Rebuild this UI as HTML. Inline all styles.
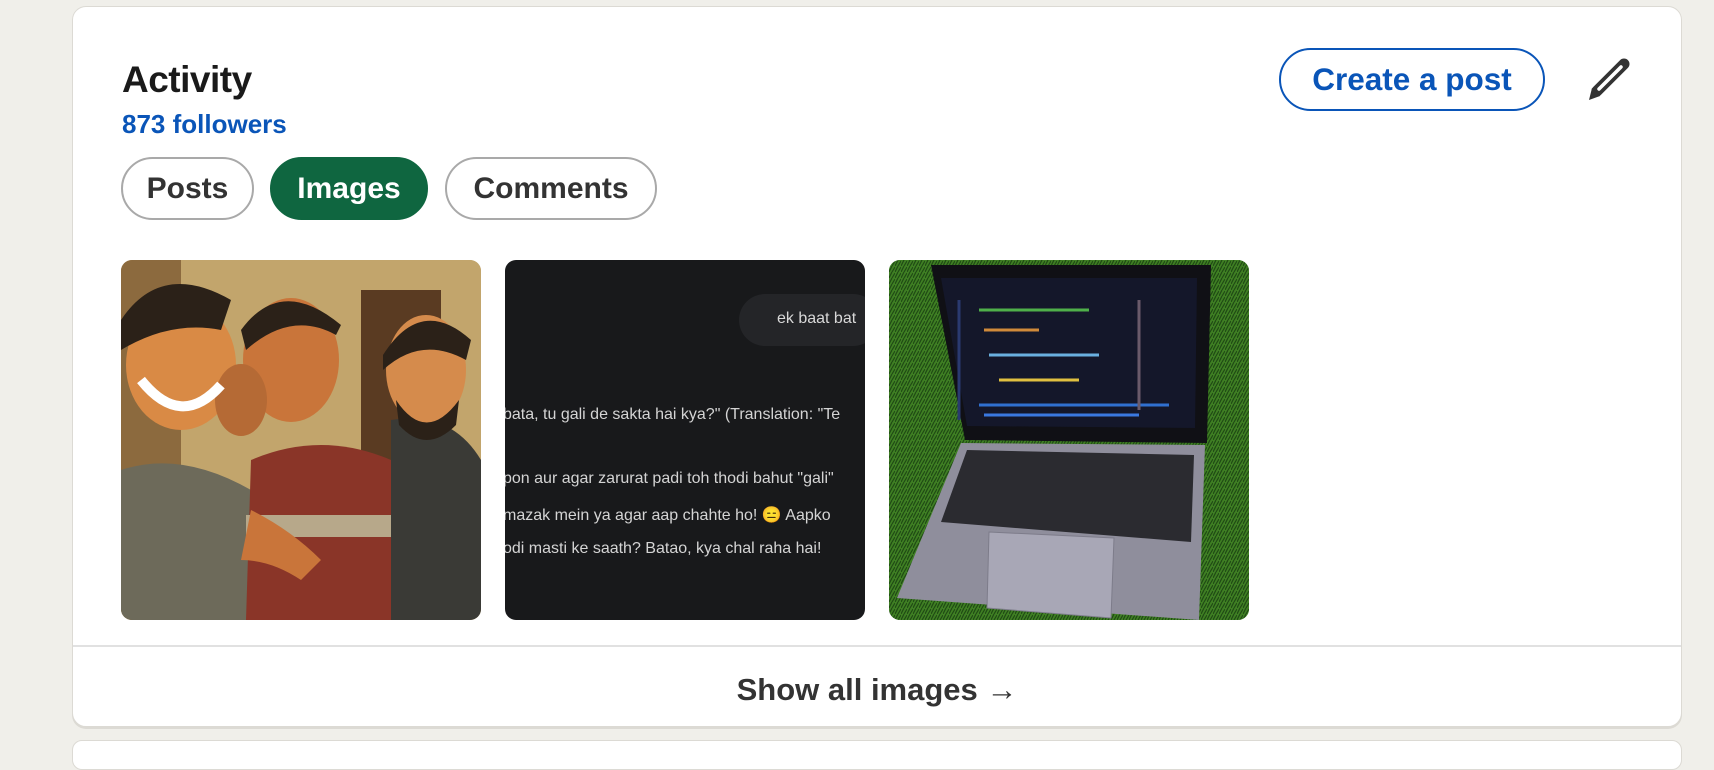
<!DOCTYPE html>
<html><head><meta charset="utf-8"><style>
*{margin:0;padding:0;box-sizing:border-box}
body{width:1714px;height:744px;background:#f0efea;font-family:"Liberation Sans",Arial,sans-serif;position:relative;overflow:hidden}
.card{position:absolute;left:72px;top:6px;width:1610px;height:721px;background:#fff;border:1px solid #dcdad4;border-radius:14px;box-shadow:0 2px 0 #dcdad4}
.card2{position:absolute;left:72px;top:740px;width:1610px;height:30px;background:#fff;border:1px solid #dcdad4;border-radius:10px}
.abs{position:absolute}
h2{position:absolute;left:49px;top:52px;font-size:37px;font-weight:700;color:#1a1a1a;letter-spacing:-0.5px}
.fol{left:49px;top:102px;font-size:26px;font-weight:700;color:#0a55b8}
.pill{position:absolute;top:150px;height:63px;border:2px solid #a9a9a9;border-radius:32px;font-size:30px;font-weight:700;color:#333;display:flex;align-items:center;justify-content:center}
.pill.on{background:#0f6640;border-color:#0f6640;color:#fff}
.img{position:absolute;top:253px;width:360px;height:360px;border-radius:11px;overflow:hidden}
.div{position:absolute;left:0;right:0;top:638px;border-top:2px solid #e1e1e1}
.show{position:absolute;left:0;right:0;top:665px;text-align:center;font-size:31px;font-weight:700;color:#333}
.btn{position:absolute;left:1206px;top:41px;width:266px;height:63px;border:2px solid #0a55b8;border-radius:32px;font-size:31.5px;font-weight:700;color:#0a55b8;display:flex;align-items:center;justify-content:center}
.t{position:absolute;color:#d4d4d4;font-size:16px;white-space:nowrap}
</style></head><body>
<div class="card">
<h2>Activity</h2>
<div class="abs fol">873 followers</div>
<div class="pill" style="left:48px;width:133px">Posts</div>
<div class="pill on" style="left:197px;width:158px">Images</div>
<div class="pill" style="left:372px;width:212px">Comments</div>
<div class="btn">Create a post</div>
<svg class="abs" style="left:1510px;top:48px" width="50" height="50" viewBox="0 0 50 50">
<line x1="14" y1="36" x2="41" y2="9" stroke="#333" stroke-width="11" stroke-linecap="round"/>
<line x1="16" y1="34" x2="38" y2="12" stroke="#fff" stroke-width="3.5" stroke-linecap="round"/>
<path d="M9 33 L17 41 L6 45 Z" fill="#333"/>
</svg>

<div class="img" style="left:48px;background:#b99b62">
<svg width="360" height="360" viewBox="0 0 360 360">
<rect width="360" height="360" fill="#c2a56c"/>
<rect x="240" y="30" width="80" height="330" fill="#5a3b22"/>
<rect x="0" y="0" width="60" height="360" fill="#8c6a3e"/>
<path d="M0 210 Q60 190 130 230 L130 360 L0 360Z" fill="#6d6a5a"/>
<path d="M130 200 Q200 170 270 200 L280 360 L125 360Z" fill="#8a3528"/>
<rect x="125" y="255" width="155" height="22" fill="#b7a88a"/>
<path d="M270 160 Q330 150 360 200 L360 360 L270 360Z" fill="#3a3a36"/>
<ellipse cx="60" cy="105" rx="55" ry="65" fill="#d98a45"/>
<path d="M0 60 Q40 0 110 40 L100 70 Q50 60 0 90Z" fill="#2b2118"/>
<ellipse cx="170" cy="100" rx="48" ry="62" fill="#c9753a"/>
<path d="M120 70 Q160 15 220 65 L215 75 Q170 50 125 90Z" fill="#2b2118"/>
<ellipse cx="305" cy="110" rx="40" ry="55" fill="#d58b4c"/>
<path d="M262 95 Q300 35 350 80 L345 100 Q300 75 262 110Z" fill="#2b2118"/>
<path d="M275 140 Q305 185 338 140 L335 165 Q305 195 278 165Z" fill="#2b2118"/>
<ellipse cx="120" cy="140" rx="26" ry="36" fill="#b56a35"/>
<path d="M20 120 Q60 170 100 125" stroke="#fff" stroke-width="10" fill="none"/>
<path d="M130 250 Q170 270 200 300 L180 320 Q150 300 120 300Z" fill="#c9753a"/>
</svg></div>

<div class="img" style="left:432px;background:#18191b">
<div class="abs" style="left:234px;top:34px;width:140px;height:52px;border-radius:26px;background:#242528"></div>
<div class="t" style="left:272px;top:50px;color:#d8d8d8">ek baat bat</div>
<div class="t" style="left:-2px;top:146px">bata, tu gali de sakta hai kya?" (Translation: "Te</div>
<div class="t" style="left:-2px;top:210px">pon aur agar zarurat padi toh thodi bahut "gali"</div>
<div class="t" style="left:-2px;top:245px">mazak mein ya agar aap chahte ho! 😑 Aapko</div>
<div class="t" style="left:-2px;top:280px">odi masti ke saath? Batao, kya chal raha hai!</div>
</div>

<div class="img" style="left:816px;background:#3b7a22">
<svg width="360" height="360" viewBox="0 0 360 360">
<defs><pattern id="g" width="6" height="6" patternUnits="userSpaceOnUse"><rect width="6" height="6" fill="#3f7f23"/><path d="M0 6 L3 0 M3 6 L6 1" stroke="#1f4a14" stroke-width="1.2"/></pattern></defs>
<rect width="360" height="360" fill="url(#g)"/>
<path d="M72 183 L316 185 L310 360 L8 338 Z" fill="#8f8e9c"/>
<path d="M78 190 L305 195 L302 282 L52 262 Z" fill="#2b2b30"/>
<path d="M100 272 L225 278 L222 358 L98 348 Z" fill="#a8a7b6" stroke="#7d7c8a"/>
<path d="M42 5 L322 5 L318 183 L76 180 Z" fill="#101015"/>
<path d="M52 18 L308 18 L306 168 L78 166 Z" fill="#14172a"/>
<g stroke-width="3"><path d="M90 50 L200 50" stroke="#4fb04a"/><path d="M95 70 L150 70" stroke="#d08a3a"/><path d="M100 95 L210 95" stroke="#6ab0e0"/><path d="M110 120 L190 120" stroke="#e0c040"/><path d="M90 145 L280 145" stroke="#3070d0"/><path d="M95 155 L250 155" stroke="#3a78e0"/><path d="M70 40 L70 160" stroke="#2a3a70"/><path d="M250 40 L250 150" stroke="#6a5a6a"/></g>
</svg></div>

<div class="div"></div>
<div class="show">Show all images <span style="font-weight:900">→</span></div>
</div>
<div class="card2"></div>
</body></html>
